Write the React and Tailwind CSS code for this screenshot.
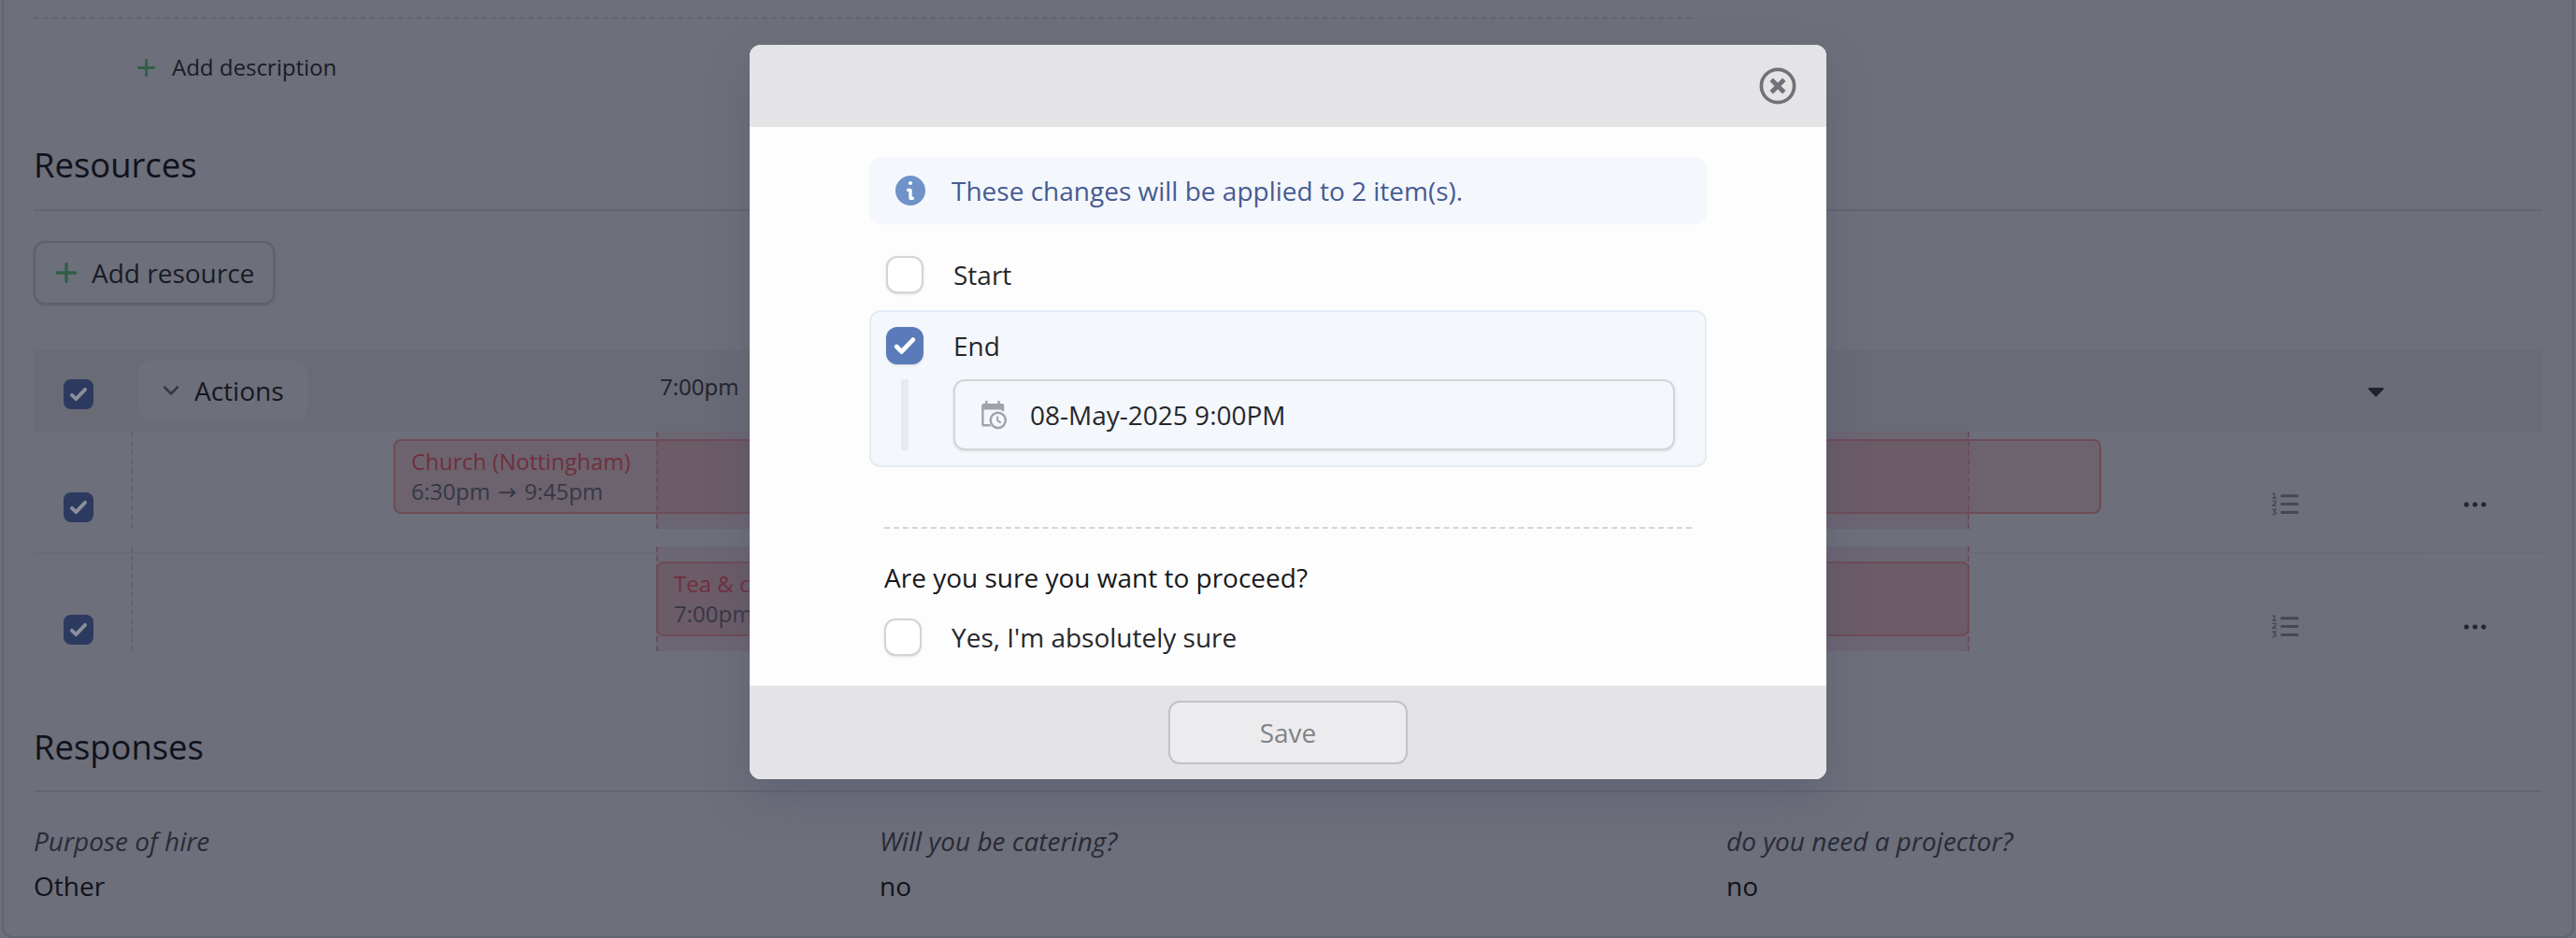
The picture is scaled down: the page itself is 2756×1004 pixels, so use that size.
import React from "react";

const Plus = ({ size, className = "" }) => (
  <svg width={size} height={size} viewBox="0 0 20 20" className={"shrink-0 " + className}>
    <path d="M10 1.4V18.6M1.4 10H18.6" stroke="#2f5f47" strokeWidth="3" strokeLinecap="round" />
  </svg>
);

const Check = ({ size, color }) => (
  <svg width={size} height={size} viewBox="0 0 40 40" fill="none">
    <path d="M11.2 21L16.6 26.4L28.8 13.6" stroke={color} strokeWidth="4.8" strokeLinecap="round" strokeLinejoin="round" />
  </svg>
);

const DimCheck = () => (
  <div className="h-8 w-8 rounded-lg bg-[#2d3a60]">
    <Check size={32} color="#8b8f9b" />
  </div>
);

const EmptyBox = () => (
  <div className="h-10 w-10 shrink-0 rounded-xl border-2 border-[#d4d4d8] bg-white shadow-sm" />
);

const NumberedList = () => (
  <svg width="30" height="28" viewBox="0 0 30 28" fill="none">
    <path d="M11.5 4.8H27.5M11.5 13.6H27.5M11.5 22.4H27.5" stroke="#464854" strokeWidth="3" strokeLinecap="square" />
    <path d="M1.3 2.2H3.4V7M1 7H5.6M1.2 10.4H4.6V12.4L1.4 15.4H5.4M1.1 19.2H4.8L3 21.8C5.8 21.6 5.8 25.2 1 24.8" stroke="#464854" strokeWidth="1.4" />
  </svg>
);

const Dots = () => (
  <svg width="24" height="6" viewBox="0 0 24 6" fill="#242631">
    <circle cx="2.8" cy="3" r="2.6" />
    <circle cx="12" cy="3" r="2.6" />
    <circle cx="21.2" cy="3" r="2.6" />
  </svg>
);

const CalendarClock = () => (
  <svg width="28" height="31" viewBox="0 0 28 31" fill="none">
    <path d="M4.2 0H6.6V3H17.4V0H19.8V3H21.8C23.4 3 24.3 4 24.3 5.5V11.5C23.4 11.1 22.4 10.8 21.5 10.8V9.5H2.6V25H9.2C9.5 26 9.9 26.8 10.5 27.6H2.6C1.1 27.6 0.2 26.6 0.2 25.2V5.5C0.2 4 1.1 3 2.6 3H4.2Z" fill="#a1a1aa" />
    <circle cx="17.8" cy="20.8" r="8.1" stroke="#a1a1aa" strokeWidth="2.5" />
    <path d="M17.2 16.4V21L20.8 23.6" stroke="#a1a1aa" strokeWidth="2" />
  </svg>
);

const Arrow = () => <span className="mx-[2px] font-['DejaVu_Sans'] leading-none">→</span>;

function Row({ title, from, to, left, width, first }) {
  return (
    <div className={"flex " + (first ? "h-[129px]" : "h-[131px] border-t-2 border-[#696b76]")}>
      <div className="ml-8 w-8 pt-[65px]">
        <DimCheck />
      </div>
      <div className={"relative ml-10 w-[2452px] " + (first ? "mt-0" : "-mt-2")}>
        <div className={first ? "flex h-[104px]" : "flex h-[112px]"}>
          <div className="w-0 border-l-2 border-dashed border-[#62646f]" />
          <div className="ml-[560px] w-[1405px] border-x-2 border-dashed border-[#6a4f5b] bg-[#6c6572]" />
        </div>
        <div
          className={
            "absolute h-20 rounded-lg border-2 border-[#6e4c57] bg-[#6b4852]/30 pl-[17px] pt-[6px] text-[24px] leading-8 " +
            (first ? "top-2" : "top-4")
          }
          style={{ left, width }}
        >
          <div className="text-[#702f3c]">{title}</div>
          <div className="text-[#363845]">
            {from} <Arrow /> {to}
          </div>
        </div>
        <div className={"absolute left-[2290px] " + (first ? "top-[64px]" : "top-[72px]")}>
          <NumberedList />
        </div>
      </div>
      <div className="flex w-32 justify-center bg-[#6e707b] pr-4 pt-[75px]">
        <Dots />
      </div>
    </div>
  );
}

function Page() {
  return (
    <div className="ml-[2px] h-[1004px] w-[2752px] overflow-hidden rounded-b-xl border-2 border-t-0 border-[#62646f] px-8">
      <div className="mt-[18px] w-[1774px] border-t-2 border-dashed border-[#62646f]" />
      <div className="mt-[34px] flex h-9 items-center pl-[111px] text-[24px] leading-9">
        <Plus size={19} className="mr-[18px]" />
        Add description
      </div>
      <h2 className="mt-[59px] h-[75px] text-[36.4px] leading-[54px] text-[#10121c]">Resources</h2>
      <div className="border-t-2 border-[#62646f]" />
      <div className="mt-8 flex h-[68px] w-[258px] items-center rounded-xl border-2 border-[#5e606b] pl-[22px] text-[28px] shadow-sm">
        <Plus size={22} className="mr-4" />
        Add resource
      </div>

      <div className="mt-12">
        <div className="flex h-[88px] bg-[#696b75]">
          <div className="ml-8 mt-8 w-8">
            <DimCheck />
          </div>
          <div className="ml-12 mt-3 flex h-16 w-[181px] items-center rounded-xl bg-[#6d6f7a] pl-[26px] text-[28px] text-[#151721]">
            <svg width="18" height="12" viewBox="0 0 19 12" fill="none" className="mr-4">
              <path d="M1.5 1.5L9.5 9.5L17.5 1.5" stroke="#363845" strokeWidth="2.8" />
            </svg>
            Actions
          </div>
          <div className="ml-[377px] mt-[22px] w-[84px] text-[24px] leading-9 text-[#20222d]">7:00pm</div>
          <svg width="18" height="10" viewBox="0 0 18 10" className="ml-[1743px] mt-[41px]">
            <path d="M2 0H16Q18 0.6 16.8 2L10 9Q9 9.8 8 9L1.2 2Q0 0.6 2 0Z" fill="#20222d" />
          </svg>
        </div>
        <Row first title="Church (Nottingham)" from="6:30pm" to="9:45pm" left={281} width={1827} />
        <Row title="Tea & coffee" from="7:00pm" to="9:00pm" left={562} width={1405} />
      </div>

      <h2 className="mt-[50px] h-[74px] text-[36.4px] leading-[54px] text-[#10121c]">Responses</h2>
      <div className="border-t-2 border-[#62646f]" />
      <div className="mt-[28px] grid grid-cols-[905px_906px_1fr] text-[28px] leading-[48px]">
        {[
          ["Purpose of hire", "Other"],
          ["Will you be catering?", "no"],
          ["do you need a projector?", "no"],
        ].map(([q, a]) => (
          <div key={q}>
            <div className="italic text-[#292b37]">{q}</div>
            <div className="text-[#10121c]">{a}</div>
          </div>
        ))}
      </div>
    </div>
  );
}

function Dialog() {
  return (
    <div className="absolute left-[802px] top-12 flex h-[786px] w-[1152px] flex-col overflow-hidden rounded-xl bg-[#fdfdfe] text-[28px] leading-10 text-[#27272a] shadow-[0_20px_50px_-6px_rgba(70,75,105,0.4)]">
      <div className="flex h-[88px] items-center justify-end bg-[#e4e4e7] pr-8">
        <svg width="40" height="40" viewBox="0 0 40 40" fill="none" stroke="#71717a">
          <circle cx="20" cy="20" r="17.6" strokeWidth="3.7" />
          <path d="M13.2 13.2L26.8 26.8M26.8 13.2L13.2 26.8" strokeWidth="4.8" />
        </svg>
      </div>
      <div className="flex-1 px-32 pt-8">
        <div className="flex h-[72px] items-center rounded-xl bg-[#f4f7fc] pl-7 text-[#465b92]">
          <svg width="32" height="32" viewBox="0 0 32 32" className="mr-7">
            <circle cx="16" cy="16" r="16" fill="#6f93c9" />
            <circle cx="16" cy="8" r="2.1" fill="#fff" />
            <path d="M13.6 15.4H16V24.2H18.4" fill="none" stroke="#fff" strokeWidth="3.4" strokeLinecap="round" strokeLinejoin="round" />
          </svg>
          These changes will be applied to 2 item(s).
        </div>
        <div className="mt-[34px] flex h-10 items-center gap-8 pl-[18px]">
          <EmptyBox />
          Start
        </div>
        <div className="mt-[18px] h-[168px] rounded-xl border-2 border-[#e4ebf5] bg-[#f4f7fc] px-4 pt-4">
          <div className="flex h-10 items-center gap-8">
            <div className="h-10 w-10 rounded-xl bg-[#5a7ab9] shadow-sm">
              <Check size={40} color="#fff" />
            </div>
            End
          </div>
          <div className="mt-4 flex h-[76px] px-4">
            <div className="w-2 bg-[#e5eaf5]" />
            <div className="ml-12 flex flex-1 items-center rounded-xl border-2 border-[#d4d4d8] pl-7 shadow-sm">
              <CalendarClock />
              <span className="ml-6">08-May-2025 9:00PM</span>
            </div>
          </div>
        </div>
        <div className="ml-4 mr-4 mt-16 border-t-2 border-dashed border-[#d4d4d8]" />
        <div className="mt-[32px] pl-4 text-[#18181b]">Are you sure you want to proceed?</div>
        <div className="mt-[24px] flex h-10 items-center gap-8 pl-4">
          <EmptyBox />
          Yes, I'm absolutely sure
        </div>
      </div>
      <div className="flex h-[100px] items-start justify-center bg-[#e4e4e7] pt-4">
        <button className="h-[68px] w-64 rounded-xl border-2 border-[#c2c2c6] bg-[#ececee] text-[#828285]">Save</button>
      </div>
    </div>
  );
}

export default function App() {
  return (
    <div className="relative h-[1004px] w-[2756px] overflow-hidden bg-[#6d6f7a] font-['Open_Sans','Noto_Sans',sans-serif] text-[#191b26]">
      <Page />
      <Dialog />
    </div>
  );
}
